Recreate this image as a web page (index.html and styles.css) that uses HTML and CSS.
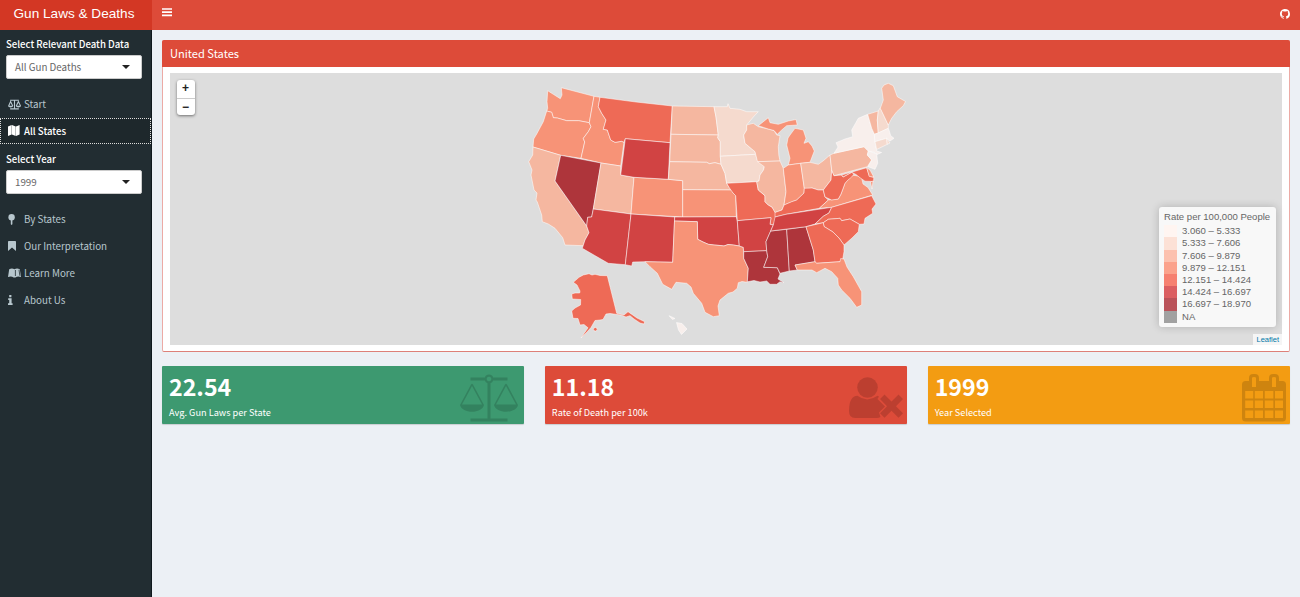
FILE: index.html
```html
<!DOCTYPE html>
<html lang="en">
<head>
<meta charset="utf-8">
<title>Gun Laws &amp; Deaths</title>
<link rel="stylesheet" href="styles.css">
</head>
<body>
<header class="header">
  <div class="logo">Gun Laws &amp; Deaths</div>
  <nav class="navbar">
    <svg class="bars" width="10" height="9" viewBox="0 0 10 9"><path d="M0 1h10M0 4.2h10M0 7.4h10"/></svg>
    <svg class="github" width="10" height="10" viewBox="0 0 16 16"><path d="M8 0C3.58 0 0 3.58 0 8c0 3.54 2.29 6.53 5.47 7.59.4.07.55-.17.55-.38V13.8c-2.23.48-2.7-1.07-2.7-1.07-.36-.92-.89-1.17-.89-1.17-.73-.5.06-.49.06-.49.8.06 1.23.83 1.23.83.71 1.22 1.87.87 2.33.66.07-.52.28-.87.51-1.07-1.78-.2-3.64-.89-3.64-3.95 0-.87.31-1.59.82-2.15-.08-.2-.36-1.02.08-2.12 0 0 .67-.21 2.2.82a7.6 7.6 0 0 1 4 0c1.53-1.04 2.2-.82 2.2-.82.44 1.1.16 1.92.08 2.12.51.56.82 1.27.82 2.15 0 3.07-1.87 3.75-3.65 3.95.29.25.54.73.54 1.48v2.2c0 .21.15.46.55.38A8 8 0 0 0 8 0z"/></svg>
  </nav>
</header>
<div class="wrapper">
  <aside class="sidebar">
    <label class="label">Select Relevant Death Data</label>
    <div class="select"><span>All Gun Deaths</span><i class="caret"></i></div>
    <a class="item start"><span class="icon"><svg width="13" height="11" viewBox="0 0 60 50"><g fill="none" stroke="currentColor" stroke-width="5"><path d="M10 5h40M30 5v40M10 45h40M3 32L12 11l10 21M38 32l10-21 10 21"/></g><path fill="currentColor" d="M0 31h24c-2 10-22 10-24 0zM36 31h24c-2 10-22 10-24 0z"/></svg></span>Start</a>
    <a class="item active"><span class="icon"><svg width="12" height="11" viewBox="0 0 12 11"><path fill="currentColor" d="M0 1.6L3.600 0v9.400L0 11zM3.900 0l3.800 1.600V11L3.900 9.400zM8 1.600L11.600 0v9.400L8 11z"/></svg></span>All States</a>
    <label class="label year">Select Year</label>
    <div class="select"><span>1999</span><i class="caret"></i></div>
    <a class="item by"><span class="icon"><svg width="8" height="11" viewBox="0 0 8 11"><circle cx="3.6" cy="3.2" r="3.2" fill="currentColor"/><path fill="currentColor" d="M2.8 6h1.6v4.2l-.8.8-.8-.8z"/></svg></span>By States</a>
    <a class="item"><span class="icon"><svg width="8" height="10" viewBox="0 0 8 10"><path fill="currentColor" d="M0 .8Q0 0 .8 0h6.4Q8 0 8 .8V10L4 6.500 0 10z"/></svg></span>Our Interpretation</a>
    <a class="item"><span class="icon"><svg width="13" height="10" viewBox="0 0 13 10"><path fill="currentColor" d="M0 9L1.200 1.200Q4-.4 6.400 1.200 9-.4 11.800 1.200L13 9Q9.600 7.800 7.400 9.500H5.600Q3.400 7.800 0 9z"/><path fill="none" stroke="#222d32" stroke-width=".8" d="M7.400 2v6M11 1.800l.9 6"/></svg></span>Learn More</a>
    <a class="item"><span class="icon"><svg width="5" height="10" viewBox="0 0 5 10"><path fill="currentColor" d="M1.200 0h2.200v2.200H1.200zM.2 3.300h3.400v5h1V10H0V8.300h1.200V5h-1z"/></svg></span>About Us</a>
  </aside>
  <main class="content">
    <section class="box">
      <h3 class="box-title">United States</h3>
      <div class="box-body">
        <div class="map">
          <svg class="states" viewBox="170 73 1112 272">
            <!-- Pacific and mountain states -->
            <path class="c4" d="M547.7 90.7L553.3 94.3 560.3 98.7 562 95 561.3 87.7 594 96.3 589.3 122.7 578.7 120.7 566.7 120.7 557.3 118 553.3 117.7 551.7 112.3 546.7 111 547.7 108.3 547 101.7Z"/>
            <path class="c4" d="M546.7 111L551.7 112.3 553.3 117.7 557.3 118 566.7 120.7 578.7 120.7 589.3 122.7 591 126.7 588.3 131.7 583.3 138.3 584.7 142 581 158.3 560.7 155.3 533 147 533.7 139 536.7 134 543.3 121.7Z"/>
            <path class="c4" d="M594 96.3L600 97.3 598.3 106.7 601.7 113.3 606 120 603.3 129.3 607.3 130 610.7 140 615 142.3 621.7 141.3 624 142.3 620.7 166 601 163 581 158.3 584.7 142 583.3 138.3 588.3 131.7 591 126.7 589.3 122.7Z"/>
            <path class="c5" d="M600 97.3L636 102 672.3 106 670 142.7 625.3 138.7 624 142.3 621.7 141.3 615 142.3 610.7 140 607.3 130 603.3 129.3 606 120 601.7 113.3 598.3 106.7Z"/>
            <path class="c3" d="M533 147L560.7 155.3 555 181 586.7 226 589 232.7 585 240 583.3 245.7 565 245 562.7 237.7 555 228.3 548.3 224 542.3 221.7 541.7 215 537.3 202 536 200 537 193 534 190 531 175 532 170 528.7 161.7 532.7 155Z"/>
            <path class="c7" d="M560.7 155.3L601 163 593.3 209 591.7 217 587.7 217.3 586.7 226 555 181Z"/>
            <path class="c3" d="M601 163L620.7 166 620.7 175 634 177.3 631 214 593.3 209Z"/>
            <path class="c6" d="M593.3 209L631 214 625.3 264.7 608.3 263.3 582.3 248.3 585 240 589 232.7 586.7 226 587.7 217.3 591.7 217Z"/>
            <path class="c4" d="M634 177.3L668.3 179.3 682.7 180.7 682.7 217 631 214Z"/>
            <path class="c6" d="M631 214L674.7 217 672.7 262.3 645 261.7 632.7 262 631.7 266 625.3 264.7Z"/>
            <path class="c6" d="M625.3 138.7L670 142.7 668.3 179.3 634 177.3 620.7 175Z"/>
            <!-- Plains and south central -->
            <path class="c3" d="M672.3 106L714 106.7 716 117 718.3 135 671 134.3Z"/>
            <path class="c3" d="M671 134.3L718.3 135 717.7 137.7 720.3 141.7 720.3 156.3 721 164.3 715 162.7 709.3 163.7 706.7 162.3 669.7 161.7Z"/>
            <path class="c3" d="M669.7 161.7L706.7 162.3 709.3 163.7 715 162.7 721 164.3 725 173.3 726.7 183.3 729.3 187.7 731.7 190 682.7 189.7 682.7 180.7 668.3 179.3Z"/>
            <path class="c4" d="M682.7 189.7L731.7 190 733 193 735.7 195.7 736.3 216.7 682.7 217Z"/>
            <path class="c6" d="M674.7 217L682.7 217 736.3 216.7 737.3 221 739.3 246 733.3 245 728 244.5 724 246 720 245.5 714 245 708.3 244.3 703 242 697.7 239.3 697.3 221.7 674.5 221Z"/>
            <path class="c4" d="M674.5 221L697.3 221.7 697.7 239.3 703 242 708.3 244.3 714 245 720 245.5 724 246 728 244.5 733.3 245 739.3 246 743.3 247.3 743.7 258.3 748.3 268.3 747.3 282.3 742 281.5 738.3 282.7 737.3 288.3 733 292 728.3 293.3 720 300 718 306 719.3 315.7 713.3 316.7 705 312.3 701.7 303.3 693.3 293.3 691 287 686.7 283.3 676 282.3 671.7 289.3 662.7 284.3 657.3 273.3 650 266.7 645 261.7 672.7 262.3Z"/>
            <path class="c2" d="M714 106.7L727.3 106.7 728 103.7 730 108.3 740 109.3 746.7 111.7 758.3 111.7 753.3 117 746.7 125 746.7 130 743.7 135 745 143.3 755 151.7 755.7 154.3 720.3 156.3 720.3 141.7 717.7 137.7 718.3 135 716 117Z"/>
            <path class="c2" d="M720.3 156.3L755.7 154.3 757.3 160 761 162.7 764.3 166.7 763.5 170 760 175 759 181 756.7 181.7 726.7 183.3 725 173.3 721 164.3Z"/>
            <path class="c5" d="M726.7 183.3L756.7 181.7 758.3 190 765 195.7 765 201.7 768.3 205 772 207 775 211.7 776.7 216.7 773.3 225 770 224.3 771 217.7 737.3 220.7 735.7 195.7 733 193 729.3 187.7Z"/>
            <path class="c6" d="M737.3 220.7L771 217.7 770 224.3 773.3 225 770.7 231 766 241.7 766.7 250.7 743.7 251.7 743.3 247.3 739.3 246Z"/>
            <path class="c7" d="M743.7 251.7L766.7 250.7 767.7 256.7 763.7 267.3 777.3 267.7 780 274 778 279 784 282.7 780 281.7 776.7 284.3 770 284.3 766.7 281 760 282 754 280.5 747.3 281.8 748.3 268.3 743.7 258.3Z"/>
            <path class="c7" d="M770.7 231L786.7 229.3 789.3 271 780 273.3 777.3 267.7 763.7 267.3 767.7 256.7 766.7 250.7 766 241.7Z"/>
            <path class="c7" d="M786.7 229.3L806 226.7 813.3 250 815 261.7 795 265 797.3 270 789.3 271Z"/>
            <!-- Great Lakes -->
            <path class="c3" d="M746.7 125L753.3 123.3 758.3 126.7 768.3 129 774 130.5 776.7 135 780 135.7 778.3 146.7 778.8 155 780 161 757.5 161.7 755 151.7 745 143.3 743.7 135 746.7 130Z"/>
            <path class="c4" d="M758.3 125.7L768.3 117.7 770 122.7 778.3 124.3 788.3 121 796 119.5 797.3 125 786.7 125.7 781.7 130 777.3 134.3 774 130.5 768.3 129Z"/>
            <path class="c4" d="M788.3 165L790 158.3 786.7 145 788 138 790 135 795 128.3 803.3 130 806 138.3 804 143.3 808.3 141.7 812 146 814.3 151 810 162.3 800.7 163.3Z"/>
            <path class="c3" d="M757.5 161.7L780 161 783.3 168.3 786 191.7 784 205 782 210 775 212.5 772 207 768.3 205 765 201.7 765 195.7 758.3 190 756.7 181.7 759 181 760 175 763.5 170 764.3 166.7Z"/>
            <path class="c4" d="M783.3 168.3L788.3 165 800.7 163.3 804.3 188.3 804 193 796.7 200 784 205 786 191.7Z"/>
            <path class="c3" d="M800.7 163.3L810 162.3 818.3 164.3 823 161 830 155 831.7 170 831 180 823.3 190 818.3 190 812 188 806.7 189.3 804.3 188.3Z"/>
            <!-- Southeast -->
            <path class="c5" d="M775 212.5L782 210 784 205 791.7 201.7 796.7 200 804 193 804.3 188.3 812 188 818.3 190 823.3 190 825 197 828.3 200 819.3 208.3 786 214.3 775 217Z"/>
            <path class="c4" d="M819.3 208.3L828.3 200 838.3 199 841 194 845 183.3 851.7 175 858 176 861.7 178.3 863 184 868 187.5 872.7 195 831.7 207.3Z"/>
            <path class="c5" d="M831.7 170L834 175.7 841.7 175 843 177 851.7 172.3 854 174 851.7 177 848 180 845 183.3 841 194 838.3 199 831.7 200 825 197 823.3 190 831 180Z"/>
            <path class="c6" d="M775 217L786 214.3 831.7 207.3 829 213 823.3 216.3 815 224 806 226.7 770.7 231 773.3 225Z"/>
            <path class="c5" d="M815 224L823.3 216.3 829 213 831.7 207.3 871.7 195.7 876 204 872 209 872.7 213.3 865 218.3 864 224 859.3 224.3 850 219 841.7 220.7 840 218.3 828.3 219.3 823.3 222.7Z"/>
            <path class="c5" d="M823.3 222.7L828.3 219.3 840 218.3 841.7 220.7 850 219 859.3 224.3 858.3 231.7 852 238 844 245 839 238 833 232 824 226.500Z"/>
            <path class="c5" d="M806 226.7L823.3 222.7 824 226.5 833 232 839 238 844 245 844 251.7 842.7 259.3 840 261.7 816.7 263.3 815 261.7 813.3 250Z"/>
            <path class="c4" d="M795 265L815 261.7 816.7 263.3 840 261.7 840.7 258.5 844 259 847 267 853.3 276.7 861.7 291.7 861.7 305 856.7 307.3 850 298.3 841.7 290 838.3 285 837.7 278.3 831.7 271.7 825 268.3 816.7 272.7 812 270 797.3 270Z"/>
            <!-- Northeast -->
            <path class="c5" d="M841.7 175L866.7 167.7 869.3 176 873.8 177.5 873.5 181.5 865 181.2 860 177.7 856 174.5 851.7 172.3 843 177Z"/>
            <path class="c4" d="M866.7 167.7L870 170 873.8 177 869.3 176.5ZM870.5 182L873 181 872 189Z"/>
            <path class="c3" d="M830 155L834 153.3 864 146.7 868.3 151 867.3 155 871.7 160 867.3 166.7 834 175.7 831.7 170Z"/>
            <path class="c1" d="M834 153.3L838 147 836 142.7 845 139 852.7 136.7 851.7 130 858.3 118.3 867.7 114.3 871.7 128.3 874.3 134 875 141.7 876.7 151 881.7 152.5 877 154.5 875 152.5 868.3 151 864 146.7Z"/>
            <path class="c1" d="M868.3 151L876.7 153.8 877.7 163.3 875 169.3 868 166.7 871.7 160 867.3 155Z"/>
            <path class="c3" d="M867.7 114.3L878.3 111 877.3 120 878.3 133.3 874.3 134 871.7 128.3Z"/>
            <path class="c2" d="M878.3 111L880.3 107.7 888.3 125 888.3 128.3 878.3 133.3 877.3 120Z"/>
            <path class="c3" d="M880.3 108.3L883.3 100 881.7 88.3 884 85 888.3 83.3 893.3 85.7 897.3 96.7 905.5 101.5 903.3 105.7 896.7 111.7 891.7 118.3 888.3 125Z"/>
            <path class="c1" d="M874.3 134.6L888.3 128.3 889.3 131 890.7 135.7 894 138.3 890 141 886.7 138.3 875 141.7Z"/>
            <path class="c2" d="M875 141.7L886.7 138.3 887.3 144.3 876.7 149.5Z"/>
            <path class="c2" d="M886.7 138.3L890 143 887.3 144.3Z"/>
            <!-- Alaska and Hawaii -->
            <path class="c5" d="M573.3 282.3L579 277.3 583.3 275 589 273.7 592 275 595 274.3 600 275.5 607.3 275.7 616.7 313.3 624 315 628 311.7 637 318 644.7 321.7 644 324 640 323 634 319 630 315.7 626 317 621 315 610 313.5 606 314 603 319.5 600 320 595 320.5 591 327.5 587 332 581 338 588 327.8 584 324.5 580 325 578 318.5 573 318.3 571.7 311 575 308 580.5 305 580.7 299.5 572.3 299 571.7 294 575 293 579.7 293 580 291 577 285Z"/>
            <circle class="c5" cx="595.3" cy="329.3" r="1.8"/>
            <path class="c1" d="M669 315.7L672 317 675 318.5 672.5 319.5ZM676.5 322.5L682 323.5 687 329 681.5 334.5 678.5 330Z"/>
          </svg>
          <div class="zoom"><b>+</b><b>−</b></div>
          <div class="legend">
            <div class="legend-title">Rate per 100,000 People</div>
            <div class="row"><i class="k1"></i>3.060 – 5.333</div>
            <div class="row"><i class="k2"></i>5.333 – 7.606</div>
            <div class="row"><i class="k3"></i>7.606 – 9.879</div>
            <div class="row"><i class="k4"></i>9.879 – 12.151</div>
            <div class="row"><i class="k5"></i>12.151 – 14.424</div>
            <div class="row"><i class="k6"></i>14.424 – 16.697</div>
            <div class="row"><i class="k7"></i>16.697 – 18.970</div>
            <div class="row"><i class="k8"></i>NA</div>
          </div>
          <div class="credit">Leaflet</div>
        </div>
      </div>
    </section>
    <div class="cards">
      <div class="card green">
        <div><strong>22.54</strong><p>Avg. Gun Laws per State</p></div>
        <svg class="scale" width="58" height="48" viewBox="0 0 58 48"><path fill="currentColor" fill-rule="evenodd" d="M10.500 3.500H24.800a4.500 4.500 0 0 1 8.400 0H47.500v3H33.200A4.500 4.500 0 0 1 30.500 9.200V44.500h17v3h-37v-3h17V9.200A4.500 4.500 0 0 1 24.800 6.500H10.500zM29 2.700a2.300 2.300 0 1 0 .01 0z"/><path fill="currentColor" fill-rule="evenodd" d="M0 31L11 10.500q1-1.500 2 0L24 31c-2 9-22 9-24 0zM2 30.500h20L12 12zM34 31L45 10.500q1-1.500 2 0L58 31c-2 9-22 9-24 0zM36 30.500h20L46 12z"/></svg>
      </div>
      <div class="card red">
        <div><strong>11.18</strong><p>Rate of Death per 100k</p></div>
        <svg class="user" width="54" height="42" viewBox="0 0 54 42"><circle cx="18.500" cy="10.500" r="10.300" fill="currentColor"/><path fill="currentColor" d="M8.500 18.800Q18 26 28.500 18.800l1.500.7-1.500 2.500 7.500 7.500-6 6 1.500 4.500Q30 41 28 41H6Q0 41 0 34 0 19 8.500 18.800z"/><path fill="currentColor" d="M35.500 17.500l7 7 7-7 4.500 4.500-7 7.200 7 7-4.500 4.600-7-7-7 7L31 36.200l7-7-7-7.200z"/></svg>
      </div>
      <div class="card orange">
        <div><strong>1999</strong><p>Year Selected</p></div>
        <svg class="calendar" width="44" height="48" viewBox="0 0 44 48"><path fill="currentColor" fill-rule="evenodd" d="M3.500 7H7V4q0-4 4-4h2q4 0 4 4v3h10V4q0-4 4-4h2q4 0 4 4v3h3.500Q44 7 44 10.500V44q0 3.500-3.500 3.500h-37Q0 47.500 0 44V10.500Q0 7 3.500 7zM10 4v9h4V4q0-1-2-1t-2 1zM30 4v9h4V4q0-1-2-1t-2 1zM3.200 17v7.500h8V17zM12.800 17v7.500H21V17zM22.800 17v7.500h8.500V17zM33 17v7.500h8V17zM3.200 26.500V34h8v-7.500zM12.800 26.500V34H21v-7.500zM22.800 26.500V34h8.500v-7.500zM33 26.500V34h8v-7.500zM3.200 36.500V44h8v-7.500zM12.800 36.500V44H21v-7.500zM22.800 36.500V44h8.500v-7.500zM33 36.500V44h8v-7.500z"/></svg>
      </div>
    </div>
  </main>
</div>
</body>
</html>
```
FILE: styles.css
```css
* { box-sizing: border-box; }
body { margin: 0; height: 597px; overflow: hidden; display: flex; flex-direction: column; background: #ecf0f5; font-family: "Noto Sans CJK SC", "Noto Sans", sans-serif; font-size: 9.800px; }
svg { display: block; }
.header { display: flex; height: 29.500px; flex: none; color: #fff; }
.logo { width: 152px; background: #d33724; font: 13.600px/27px "Liberation Sans", Arial, sans-serif; text-align: center; padding-right: 4px; white-space: nowrap; }
.navbar { flex: 1; display: flex; align-items: center; justify-content: space-between; padding: 0 10px 5px; background: #dd4b39; }
.bars { stroke: #fff; stroke-width: 1.7; }
.github { fill: #fff; margin-top: 4px; }
.wrapper { display: flex; flex: 1; }
.sidebar { width: 152px; flex: none; background: #222d32; border-right: 1px solid #10191d; padding-top: 7.500px; color: #b8c7ce; }
.label { display: block; padding-left: 6px; font-size: 9.600px; line-height: 14px; color: #fff; font-weight: 500; white-space: nowrap; }
.select { display: flex; align-items: center; justify-content: space-between; width: 136px; height: 24px; margin: 4px 0 0 6px; padding: 0 11px 0 8px; background: #fff; border: 1px solid #ccc; border-radius: 2px; color: #666; line-height: 22px; }
.caret { border: 4px solid transparent; border-top-color: #222; border-bottom: 0; }
.item { display: flex; align-items: center; height: 27.100px; padding-left: 8px; white-space: nowrap; }
.icon { width: 16px; flex: none; }
.start { margin-top: 11.500px; }
.active { height: 26px; background: #1e282c; color: #fff; outline: 1px dotted #ddd; outline-offset: -1px; font-weight: 500; font-size: 9.600px; }
.year { margin-top: 8px; }
.by { margin-top: 12px; }
.content { flex: 1; padding: 10.500px 10px; }
.box { height: 312px; border: 1px solid #ecaaa5; border-bottom-color: #dd8079; border-radius: 2px; background: #fff; }
.box-title { margin: -1px -1px 0; height: 27px; padding-left: 8px; border-radius: 2px 2px 0 0; background: #dd4b39; color: #fff; font-size: 11.100px; font-weight: 400; line-height: 27px; }
.box-body { padding: 6px 7px; }
.map { position: relative; height: 272px; background: #ddd; font-family: "Liberation Sans", Arial, sans-serif; }
.states { width: 1112px; height: 272px; stroke: rgba(255,255,255,.5); stroke-width: 1; stroke-linejoin: round; }
.c1 { fill: #f8efec; }
.c2 { fill: #f5dace; }
.c3 { fill: #f5b7a0; }
.c4 { fill: #f79377; }
.c5 { fill: #ee6a56; }
.c6 { fill: #d14343; }
.c7 { fill: #ae353b; }
.zoom { position: absolute; left: 6.500px; top: 7px; width: 18px; background: #fff; border-radius: 3px; box-shadow: 0 1px 3px rgba(0,0,0,.5); color: #222; font: bold 12px/17px "Liberation Sans", Arial, sans-serif; text-align: center; }
.zoom b { display: block; height: 17.500px; }
.zoom b + b { border-top: 1px solid #ccc; }
.legend { position: absolute; right: 6px; top: 134px; width: 117px; height: 120px; padding: 4px 5px; background: #f8f8f8; border-radius: 3px; box-shadow: 0 0 9px rgba(0,0,0,.2); color: #666; font-size: 9.550px; line-height: 12.700px; white-space: nowrap; }
.legend-title { height: 14.200px; line-height: 12px; }
.row { display: flex; height: 12.200px; }
.row i { width: 12.500px; margin-right: 5.500px; }
.k1 { background: #fff5f1; }
.k2 { background: #fce1d6; }
.k3 { background: #fcc1af; }
.k4 { background: #fba28c; }
.k5 { background: #f68070; }
.k6 { background: #db5e61; }
.k7 { background: #ba5259; }
.k8 { background: #a1a1a1; }
.credit { position: absolute; right: 0; bottom: 0; padding: 0 3px; background: #f5f5f5; color: #0078a8; font-size: 7.500px; line-height: 11px; }
.cards { display: grid; grid-template-columns: repeat(3, 1fr); gap: 20.500px; margin-top: 14px; }
.card { display: flex; justify-content: space-between; height: 58px; padding: 7px 0 0 7px; border-radius: 1px; color: #fff; box-shadow: 0 1px 1px rgba(0,0,0,.15); }
.card strong { display: block; font-size: 23.200px; line-height: 26px; font-weight: 700; }
.card p { margin: 6px 0 0; font-size: 9.200px; line-height: 14px; }
.card svg { color: rgba(0,0,0,.15); }
.green { background: #3d9970; }
.red { background: #dd4b39; }
.orange { background: #f39c12; }
.scale { margin: 1px 6px 0 0; }
.user { margin: 4px 4px 0 0; }
.calendar { margin: 1px 4px 0 0; }
```
